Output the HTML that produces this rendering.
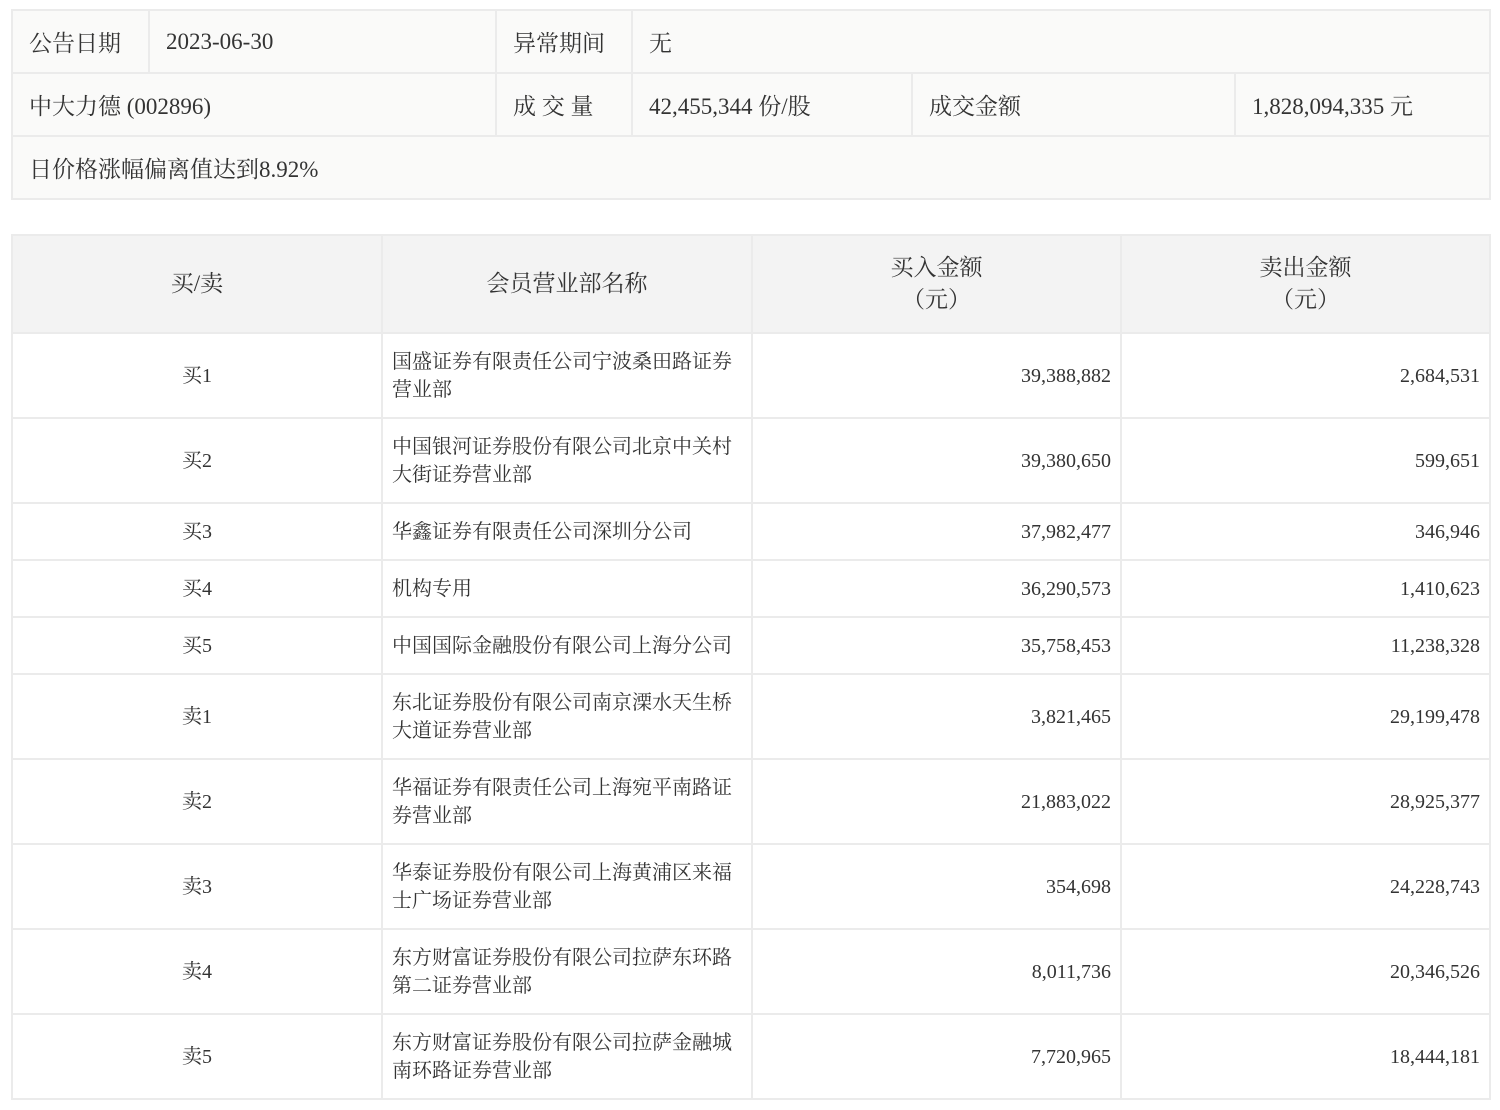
<!DOCTYPE html>
<html><head><meta charset="utf-8"><style>
html,body{margin:0;padding:0;background:#fff;width:1500px;height:1110px;overflow:hidden}
body{font-family:"Liberation Serif","Noto Serif CJK SC",serif;color:#333}
table{border-collapse:collapse;table-layout:fixed;position:absolute;left:11px;width:1478px}
td,th{border:2px solid #ebebeb;padding:0;font-weight:normal}
#t1{top:9px;background:#fafaf9;font-size:23px}
#t1 td{padding-left:16px;height:61px}
#t2{top:234px;font-size:20px}
#t2 th{background:#f3f3f3;font-size:23px;line-height:32px;height:96px}
#t2 td{line-height:28px}
.c{text-align:center}.r{text-align:right;padding-right:9px}.n{padding-left:9px}
.h2 td{height:83px}.h1 td{height:55px}
</style></head><body>
<table id="t1">
<colgroup><col style="width:137px"><col style="width:347px"><col style="width:136px"><col style="width:280px"><col style="width:323px"><col style="width:255px"></colgroup>
<tr><td>公告日期</td><td>2023-06-30</td><td>异常期间</td><td colspan="3">无</td></tr>
<tr><td colspan="2">中大力德 (002896)</td><td>成 交 量</td><td>42,455,344 份/股</td><td>成交金额</td><td>1,828,094,335 元</td></tr>
<tr><td colspan="6" style="height:61px;padding-left:16px">日价格涨幅偏离值达到8.92%</td></tr>
</table>
<table id="t2">
<colgroup><col style="width:370px"><col style="width:370px"><col style="width:369px"><col style="width:369px"></colgroup>
<tr><th>买/卖</th><th>会员营业部名称</th><th>买入金额<br>（元）</th><th>卖出金额<br>（元）</th></tr>
<tr class="h2"><td class="c">买1</td><td class="n">国盛证券有限责任公司宁波桑田路证券<br>营业部</td><td class="r">39,388,882</td><td class="r">2,684,531</td></tr>
<tr class="h2"><td class="c">买2</td><td class="n">中国银河证券股份有限公司北京中关村<br>大街证券营业部</td><td class="r">39,380,650</td><td class="r">599,651</td></tr>
<tr class="h1"><td class="c">买3</td><td class="n">华鑫证券有限责任公司深圳分公司</td><td class="r">37,982,477</td><td class="r">346,946</td></tr>
<tr class="h1"><td class="c">买4</td><td class="n">机构专用</td><td class="r">36,290,573</td><td class="r">1,410,623</td></tr>
<tr class="h1"><td class="c">买5</td><td class="n">中国国际金融股份有限公司上海分公司</td><td class="r">35,758,453</td><td class="r">11,238,328</td></tr>
<tr class="h2"><td class="c">卖1</td><td class="n">东北证券股份有限公司南京溧水天生桥<br>大道证券营业部</td><td class="r">3,821,465</td><td class="r">29,199,478</td></tr>
<tr class="h2"><td class="c">卖2</td><td class="n">华福证券有限责任公司上海宛平南路证<br>券营业部</td><td class="r">21,883,022</td><td class="r">28,925,377</td></tr>
<tr class="h2"><td class="c">卖3</td><td class="n">华泰证券股份有限公司上海黄浦区来福<br>士广场证券营业部</td><td class="r">354,698</td><td class="r">24,228,743</td></tr>
<tr class="h2"><td class="c">卖4</td><td class="n">东方财富证券股份有限公司拉萨东环路<br>第二证券营业部</td><td class="r">8,011,736</td><td class="r">20,346,526</td></tr>
<tr class="h2"><td class="c">卖5</td><td class="n">东方财富证券股份有限公司拉萨金融城<br>南环路证券营业部</td><td class="r">7,720,965</td><td class="r">18,444,181</td></tr>
</table>
</body></html>
